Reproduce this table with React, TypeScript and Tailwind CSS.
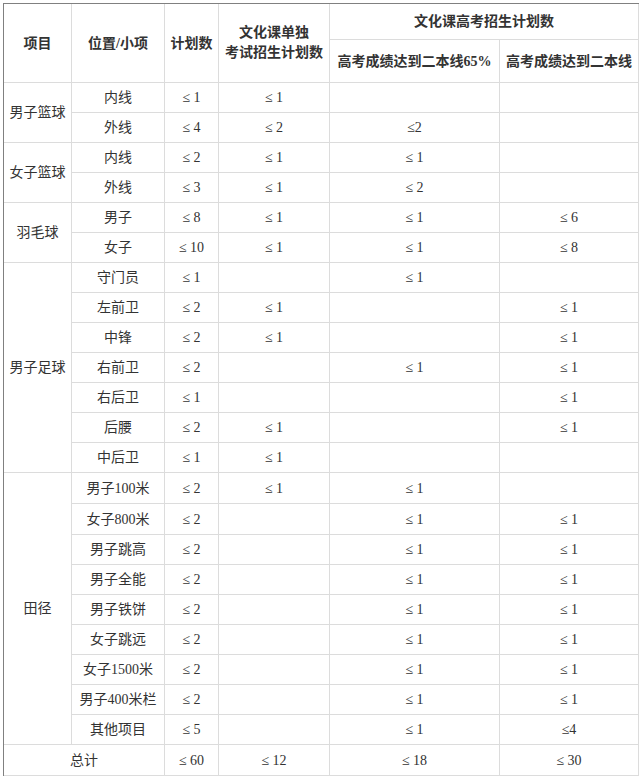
import React from "react";

type Row = { sub: string; v: [string, string, string, string]; tall?: boolean };
type Group = { name: string; rows: Row[] };

const groups: Group[] = [
  {
    name: "男子篮球",
    rows: [
      { sub: "内线", v: ["≤ 1", "≤ 1", "", ""] },
      { sub: "外线", v: ["≤ 4", "≤ 2", "≤2", ""] },
    ],
  },
  {
    name: "女子篮球",
    rows: [
      { sub: "内线", v: ["≤ 2", "≤ 1", "≤ 1", ""] },
      { sub: "外线", v: ["≤ 3", "≤ 1", "≤ 2", ""] },
    ],
  },
  {
    name: "羽毛球",
    rows: [
      { sub: "男子", v: ["≤ 8", "≤ 1", "≤ 1", "≤ 6"] },
      { sub: "女子", v: ["≤ 10", "≤ 1", "≤ 1", "≤ 8"] },
    ],
  },
  {
    name: "男子足球",
    rows: [
      { sub: "守门员", v: ["≤ 1", "", "≤ 1", ""] },
      { sub: "左前卫", v: ["≤ 2", "≤ 1", "", "≤ 1"] },
      { sub: "中锋", v: ["≤ 2", "≤ 1", "", "≤ 1"] },
      { sub: "右前卫", v: ["≤ 2", "", "≤ 1", "≤ 1"] },
      { sub: "右后卫", v: ["≤ 1", "", "", "≤ 1"] },
      { sub: "后腰", v: ["≤ 2", "≤ 1", "", "≤ 1"] },
      { sub: "中后卫", v: ["≤ 1", "≤ 1", "", ""] },
    ],
  },
  {
    name: "田径",
    rows: [
      { sub: "男子100米", v: ["≤ 2", "≤ 1", "≤ 1", ""], tall: true },
      { sub: "女子800米", v: ["≤ 2", "", "≤ 1", "≤ 1"], tall: true },
      { sub: "男子跳高", v: ["≤ 2", "", "≤ 1", "≤ 1"] },
      { sub: "男子全能", v: ["≤ 2", "", "≤ 1", "≤ 1"] },
      { sub: "男子铁饼", v: ["≤ 2", "", "≤ 1", "≤ 1"] },
      { sub: "女子跳远", v: ["≤ 2", "", "≤ 1", "≤ 1"] },
      { sub: "女子1500米", v: ["≤ 2", "", "≤ 1", "≤ 1"] },
      { sub: "男子400米栏", v: ["≤ 2", "", "≤ 1", "≤ 1"] },
      { sub: "其他项目", v: ["≤ 5", "", "≤ 1", "≤4"] },
    ],
  },
];

const cell = "border-r border-b border-[#dcdcdc] text-center align-middle p-0";
const th = `${cell} font-bold text-[#333]`;

export default function App() {
  return (
    <div className="bg-white p-[3px] w-[641px] min-h-[779px]">
      <table
        className="table-fixed border-separate border-spacing-0 border-l border-t border-[#808080] text-[14px] text-[#333]"
        style={{ fontFamily: '"Liberation Serif", "Noto Sans CJK SC", serif', width: 635 }}
      >
        <colgroup>
          <col className="w-[68px]" />
          <col className="w-[93px]" />
          <col className="w-[54px]" />
          <col className="w-[111px]" />
          <col className="w-[170px]" />
          <col className="w-[139px]" />
        </colgroup>
        <thead>
          <tr className="h-[36px]">
            <th rowSpan={2} className={th}>项目</th>
            <th rowSpan={2} className={th}>位置/小项</th>
            <th rowSpan={2} className={th}>计划数</th>
            <th rowSpan={2} className={`${th} leading-[20px]`}>
              文化课单独
              <br />
              考试招生计划数
            </th>
            <th colSpan={2} className={th}>文化课高考招生计划数</th>
          </tr>
          <tr className="h-[43px]">
            <th className={th}>高考成绩达到二本线65%</th>
            <th className={th}>高考成绩达到二本线</th>
          </tr>
        </thead>
        <tbody>
          {groups.map((g) =>
            g.rows.map((r, i) => (
              <tr key={g.name + r.sub} className={r.tall ? "h-[31px]" : "h-[30px]"}>
                {i === 0 && (
                  <td rowSpan={g.rows.length} className={cell}>
                    {g.name}
                  </td>
                )}
                <td className={cell}>{r.sub}</td>
                {r.v.map((v, j) => (
                  <td key={j} className={cell}>
                    {v}
                  </td>
                ))}
              </tr>
            ))
          )}
          <tr className="h-[31px]">
            <td colSpan={2} className={cell}>总计</td>
            <td className={cell}>≤ 60</td>
            <td className={cell}>≤ 12</td>
            <td className={cell}>≤ 18</td>
            <td className={cell}>≤ 30</td>
          </tr>
        </tbody>
      </table>
    </div>
  );
}
